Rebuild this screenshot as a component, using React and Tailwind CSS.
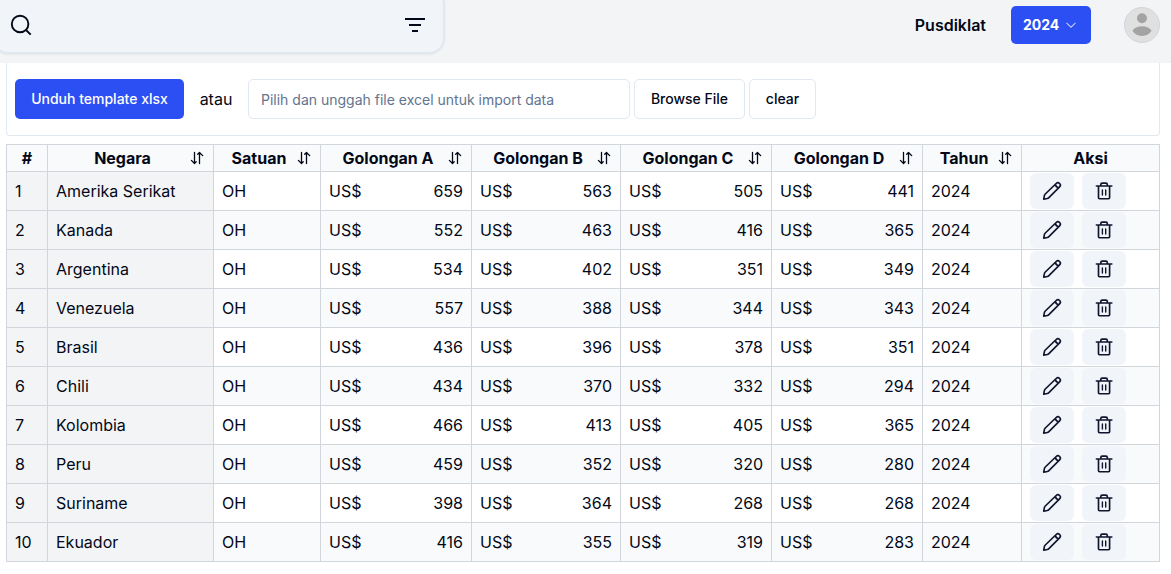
import React from "react";

const rows = [
  ["Amerika Serikat", 659, 563, 505, 441],
  ["Kanada", 552, 463, 416, 365],
  ["Argentina", 534, 402, 351, 349],
  ["Venezuela", 557, 388, 344, 343],
  ["Brasil", 436, 396, 378, 351],
  ["Chili", 434, 370, 332, 294],
  ["Kolombia", 466, 413, 405, 365],
  ["Peru", 459, 352, 320, 280],
  ["Suriname", 398, 364, 268, 268],
  ["Ekuador", 416, 355, 319, 283],
];

const columns = ["Negara", "Satuan", "Golongan A", "Golongan B", "Golongan C", "Golongan D", "Tahun"];

const GRID = "grid grid-cols-[41px_166px_107px_151px_149px_151px_151px_99px_138px]";
const CELL = "flex items-center border-l border-t border-gray-300 px-2";

function SortIcon() {
  return (
    <svg className="h-4 w-4 shrink-0" viewBox="0 0 16 16" fill="none" stroke="currentColor" strokeWidth="1.3" strokeLinecap="round" strokeLinejoin="round">
      <path d="M5.500 2.500v10.700M2.400 10.400l3.100 3.100 1.700-1.700M10.500 13.500V2.800M8.700 4.300l1.800-1.800 3.200 3.100" />
    </svg>
  );
}

function PencilIcon() {
  return (
    <svg className="h-6 w-6" viewBox="0 0 24 24" fill="none" stroke="currentColor" strokeWidth="1.65" strokeLinecap="round" strokeLinejoin="round">
      <path d="M3.700 20.200l.7-3.600c.1-.6.4-1.100.9-1.600L16.200 4.500c1-.9 2.400-.9 3.400 0s.9 2.400 0 3.400L8.900 18.600c-.5.5-1 .8-1.600.9zM15.400 5.500c.3 1.600 1.600 2.800 3.200 3.200" />
    </svg>
  );
}

function TrashIcon() {
  return (
    <svg className="h-6 w-6" viewBox="0 0 24 24" fill="none" stroke="currentColor" strokeWidth="1.65" strokeLinecap="round" strokeLinejoin="round">
      <path d="M4.400 7h15.400M6.500 7v11.700c0 .6.400 1 1 1h9.100c.6 0 1-.4 1-1V7M8.800 7V5.500c0-.8.6-1.400 1.400-1.400h3.700c.8 0 1.400.6 1.400 1.400V7" />
      <path strokeWidth="1.4" d="M10.400 10.900v5.200M13.700 10.900v5.200" />
    </svg>
  );
}

function Amount({ value }) {
  return (
    <div className={CELL + " justify-between"}>
      <span>US$</span>
      <span>{value}</span>
    </div>
  );
}

export default function App() {
  return (
    <div className="h-[574px] w-[1171px] overflow-hidden bg-white font-['Inter',sans-serif] text-base text-[#020817]">
      <header className="flex h-[63px] items-start bg-gray-100">
        <div className="-ml-2 -mt-3 flex h-[66px] w-[453px] items-center justify-between rounded-2xl border-2 border-slate-200 bg-[#f1f4f9] pl-[15px] pr-4 pt-[7px] shadow-xs">
          <svg className="h-6 w-6" viewBox="0 0 24 24" fill="none" stroke="currentColor" strokeWidth="1.9">
            <circle cx="11.100" cy="11" r="8.300" />
            <path d="M17 17l4.700 4.700" />
          </svg>
          <svg className="h-6 w-6" viewBox="0 0 24 24" fill="none" stroke="currentColor" strokeWidth="2">
            <path d="M2 6h20M6 12h12M9 18h6" />
          </svg>
        </div>
        <div className="ml-auto mr-[11px] flex h-[50px] items-center">
          <span className="mr-[25px] font-semibold">Pusdiklat</span>
          <button className="mr-[33px] flex h-[38px] w-20 items-center rounded-[5px] bg-[#2c4ff3] pl-3 text-sm font-bold text-white">
            2024
            <svg className="ml-1.5 h-3 w-3" viewBox="0 0 12 12" fill="none" stroke="currentColor" strokeOpacity="0.7" strokeWidth="1.1">
              <path d="M1.500 3.800L6 8.200l4.500-4.400" />
            </svg>
          </button>
          <svg className="h-9 w-9" viewBox="0 0 36 36">
            <circle cx="18" cy="18" r="17.500" fill="#e0e0e0" stroke="#d1d5db" />
            <circle cx="18" cy="11.300" r="5" fill="#a3a3a3" />
            <path d="M8.500 23.800C10 20.800 13.500 19.300 18 19.300s8 1.500 9.500 4.500C25.500 27.200 22 29 18 29s-7.500-1.800-9.500-5.200z" fill="#a3a3a3" />
          </svg>
        </div>
      </header>

      <section className="ml-1.5 flex h-[73px] w-[1154px] items-start rounded-b border border-t-0 border-slate-200 pl-2 pt-4 text-sm font-medium">
        <button className="h-10 w-[169px] rounded-[5px] bg-[#2c4ff3] text-white">Unduh template xlsx</button>
        <span className="mx-4 flex h-10 w-8 items-center justify-center text-base font-normal">atau</span>
        <div className="flex h-10 w-[382px] items-center rounded-[5px] border border-slate-200 px-3 pt-0.5 font-normal text-slate-500">
          Pilih dan unggah file excel untuk import data
        </div>
        <button className="ml-1 h-10 w-[111px] rounded-[5px] border border-slate-200">Browse File</button>
        <button className="ml-1 h-10 w-[67px] rounded-[5px] border border-slate-200">clear</button>
      </section>

      <div className="ml-1.5 mt-2 w-[1154px] border-b border-r border-gray-300">
        <div className={GRID + " h-[27px] bg-[#f9fafc] font-bold"}>
          <div className={CELL + " justify-center"}>#</div>
          {columns.map((name) => (
            <div key={name} className={CELL}>
              <span className="flex-1 text-center">{name}</span>
              <SortIcon />
            </div>
          ))}
          <div className={CELL + " justify-center"}>Aksi</div>
        </div>
        {rows.map(([country, a, b, c, d], i) => (
          <div key={country} className={GRID + " h-[39px] " + (i % 2 ? "bg-[#f9fafc]" : "bg-white")}>
            <div className={CELL + " bg-gray-100"}>{i + 1}</div>
            <div className={CELL + " bg-gray-100"}>{country}</div>
            <div className={CELL}>OH</div>
            <Amount value={a} />
            <Amount value={b} />
            <Amount value={c} />
            <Amount value={d} />
            <div className={CELL}>2024</div>
            <div className={CELL + " gap-2 text-[#11142d]"}>
              <button className="flex h-9 w-11 items-center justify-center rounded-md bg-[#f1f4f9]"><PencilIcon /></button>
              <button className="flex h-9 w-11 items-center justify-center rounded-md bg-[#f1f4f9]"><TrashIcon /></button>
            </div>
          </div>
        ))}
      </div>
    </div>
  );
}
